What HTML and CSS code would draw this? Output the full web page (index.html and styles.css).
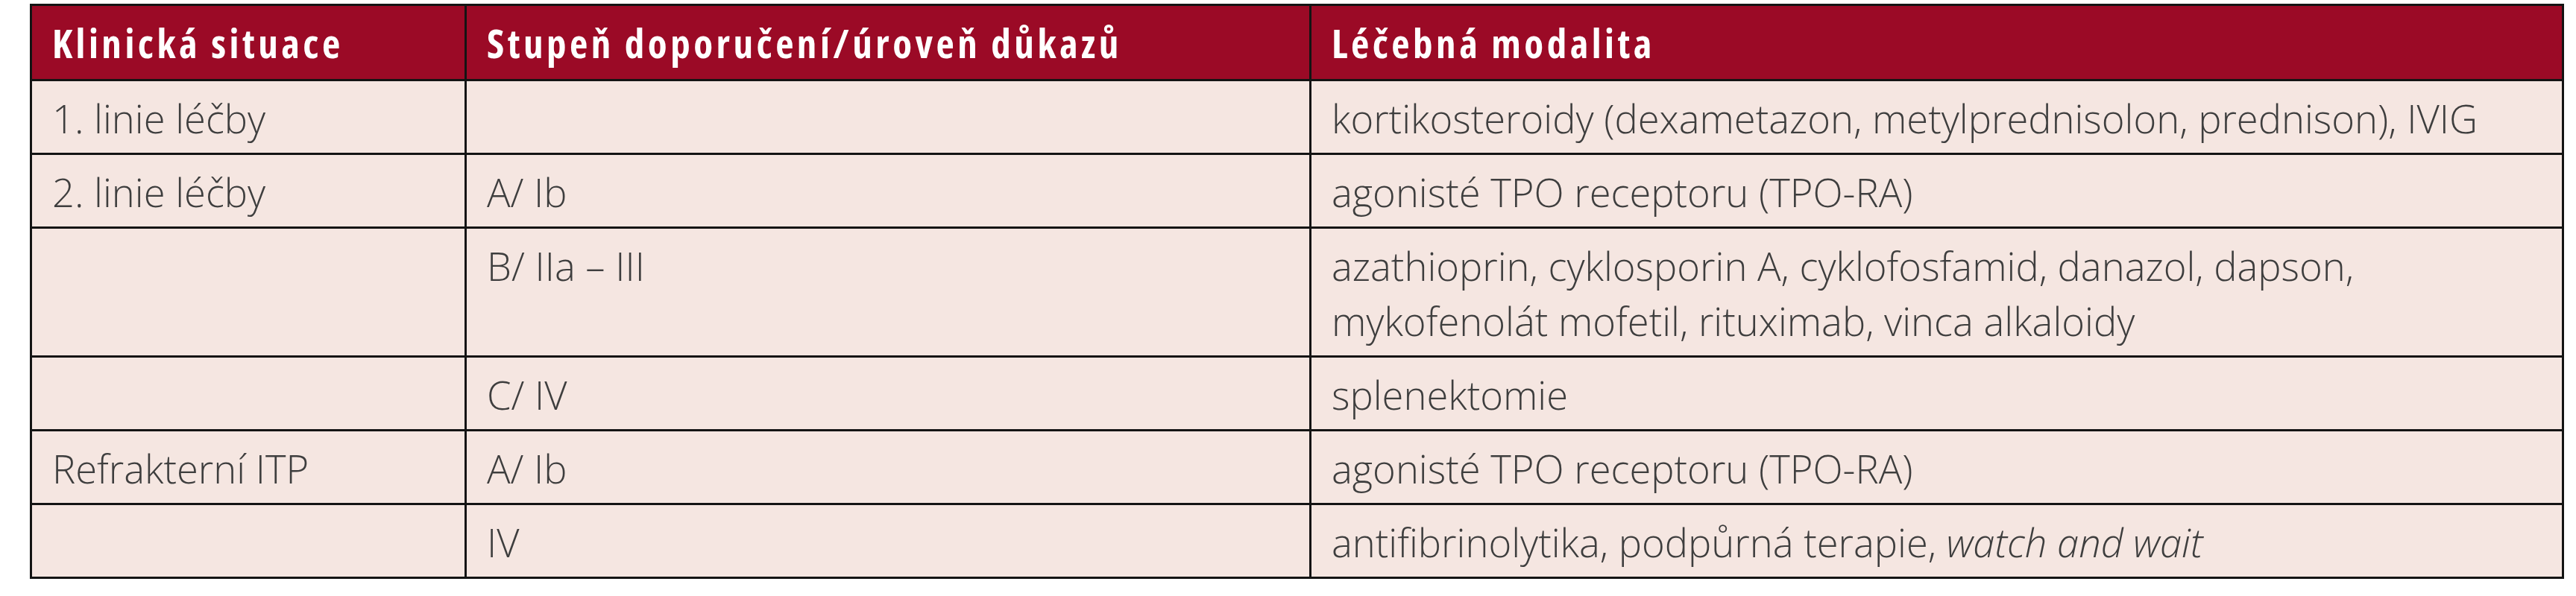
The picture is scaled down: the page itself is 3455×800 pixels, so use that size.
FILE: index.html
```html
<!DOCTYPE html>
<html lang="cs">
<head>
<meta charset="utf-8">
<title>Léčba ITP</title>
<link rel="stylesheet" href="styles.css">
</head>
<body>
<table class="tbl">
  <colgroup>
    <col class="c1">
    <col class="c2">
    <col class="c3">
  </colgroup>
  <thead>
    <tr>
      <th>Klinická situace</th>
      <th>Stupeň doporučení/úroveň důkazů</th>
      <th>Léčebná modalita</th>
    </tr>
  </thead>
  <tbody>
    <tr>
      <td>1. linie léčby</td>
      <td></td>
      <td>kortikosteroidy (dexametazon, metylprednisolon, prednison), IVIG</td>
    </tr>
    <tr>
      <td>2. linie léčby</td>
      <td>A/ Ib</td>
      <td>agonisté TPO receptoru (TPO-RA)</td>
    </tr>
    <tr>
      <td></td>
      <td>B/ IIa – III</td>
      <td>azathioprin, cyklosporin A, cyklofosfamid, danazol, dapson,<br>mykofenolát mofetil, rituximab, vinca alkaloidy</td>
    </tr>
    <tr>
      <td></td>
      <td>C/ IV</td>
      <td>splenektomie</td>
    </tr>
    <tr>
      <td>Refrakterní ITP</td>
      <td>A/ Ib</td>
      <td>agonisté TPO receptoru (TPO-RA)</td>
    </tr>
    <tr>
      <td></td>
      <td>IV</td>
      <td>antifibrinolytika, podpůrná terapie, <em>watch and wait</em></td>
    </tr>
  </tbody>
</table>
</body>
</html>
```
FILE: styles.css
```css
html, body {
  margin: 0;
  padding: 0;
  background: #ffffff;
}

body {
  padding: 5px 0 0 40px;
  font-family: "Open Sans", "Liberation Sans", sans-serif;
}

.tbl {
  border-collapse: collapse;
  table-layout: fixed;
  width: 3396px;
  border: 3px solid #141414;
}

.c1 { width: 583px; }
.c2 { width: 1133px; }
.c3 { width: 1680px; }

.tbl th,
.tbl td {
  border: 3px solid #141414;
  text-align: left;
  vertical-align: top;
  padding: 12px 20px 10px 27px;
  line-height: 74px;
  white-space: nowrap;
}

.tbl th {
  background: #9b0a26;
  color: #ffffff;
  font-size: 53px;
  font-weight: 700;
  font-stretch: 75%;
  letter-spacing: 4.5px;
  padding-top: 13px;
  padding-bottom: 11px;
}

.tbl td {
  background: #f5e6e1;
  color: #3e3e3e;
  font-size: 52.5px;
  font-weight: 300;
  font-stretch: 100%;
  padding-top: 13px;
  padding-bottom: 9px;
}

.tbl em {
  font-style: italic;
}
```
